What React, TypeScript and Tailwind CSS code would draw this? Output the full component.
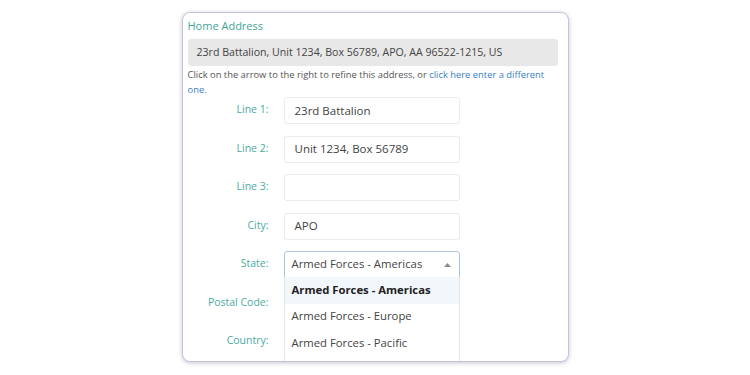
import React from "react";

const font = { fontFamily: '"Open Sans", "Noto Sans", sans-serif' };

function Row({ label, value, children }: { label: string; value?: string; children?: React.ReactNode }) {
  return (
    <div className="flex h-[27px] items-center">
      <div className="w-[81px] pb-[1px] text-right text-[10.5px] text-[#4aab9f]">{label}</div>
      <div className="relative ml-[15px] h-full w-[176px]">
        {children ?? (
          <div className="flex h-full items-center rounded-[3px] border border-[#ececec] bg-white px-[10px] text-[11.5px] text-[#444]">
            {value}
          </div>
        )}
      </div>
    </div>
  );
}

export default function App() {
  const options = ["Armed Forces - Americas", "Armed Forces - Europe", "Armed Forces - Pacific"];
  return (
    <div className="flex h-[375px] w-[750px] justify-center bg-white pt-[12px]" style={font}>
      <div className="h-[350px] w-[387px] overflow-hidden rounded-[8px] border border-[#c6c4da] bg-white px-[5px] shadow-[0_1px_4px_rgba(90,90,130,0.35)]">
        <div className="pt-[5px] text-[11px] leading-[16px] text-[#3fa597]">Home Address</div>
        <div className="mt-[5px] mr-[5px] flex h-[27px] items-center rounded-[3px] bg-[#e8e8e8] px-[9px] text-[10.6px] text-[#444]">
          23rd Battalion, Unit 1234, Box 56789, APO, AA 96522-1215, US
        </div>
        <div className="pt-[1px] pr-[10px] text-[9.4px] leading-[15px] text-[#555]">
          Click on the arrow to the right to refine this address, or{" "}
          <span className="text-[#3b82c4]">click here enter a different one.</span>
        </div>
        <div className="flex flex-col gap-[11.5px]">
          <Row label="Line 1:" value="23rd Battalion" />
          <Row label="Line 2:" value="Unit 1234, Box 56789" />
          <Row label="Line 3:" value="" />
          <Row label="City:" value="APO" />
          <Row label="State:">
            <div className="flex h-full items-center justify-between rounded-t-[3px] border border-[#a9c5e3] bg-white pl-[7px] pr-[8px] text-[11.3px] text-[#444]">
              <span>Armed Forces - Americas</span>
              <svg width="7" height="4" viewBox="0 0 7 4">
                <path d="M0 4 L3.5 0 L7 4 Z" fill="#8a8a8a" />
              </svg>
            </div>
            <div className="absolute left-0 top-[26px] z-10 h-[100px] w-[176px] border-x border-b border-[#e4e4e4] bg-white">
              {options.map((o, i) => (
                <div
                  key={o}
                  className={`flex h-[26.5px] items-center px-[7px] text-[11.3px] ${
                    i === 0 ? "bg-[#f2f7fc] font-bold text-[#222]" : "text-[#444]"
                  }`}
                >
                  {o}
                </div>
              ))}
            </div>
          </Row>
          <Row label="Postal Code:" value="" />
          <Row label="Country:" value="" />
        </div>
      </div>
    </div>
  );
}
